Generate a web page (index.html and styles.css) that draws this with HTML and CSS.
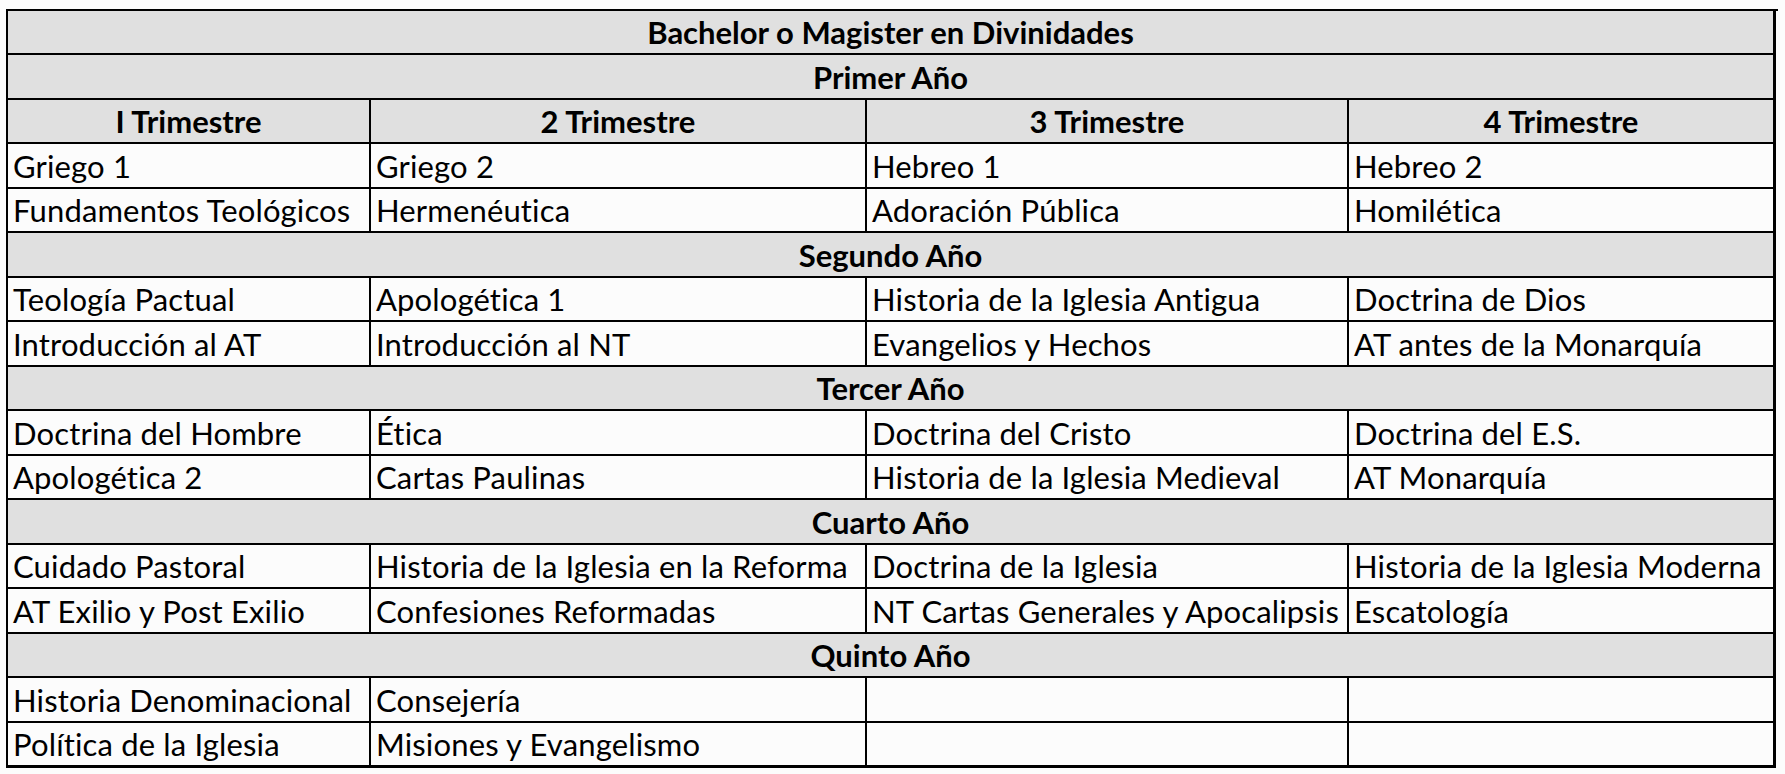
FILE: index.html
```html
<!DOCTYPE html>
<html lang="es">
<head>
<meta charset="utf-8">
<title>Bachelor o Magister en Divinidades</title>
<link rel="stylesheet" href="styles.css">
</head>
<body>
<div class="sheet">
  <div class="cell band title">Bachelor o Magister en Divinidades</div>
  <div class="cell band">Primer Año</div>
  <div class="cell head">I Trimestre</div>
  <div class="cell head">2 Trimestre</div>
  <div class="cell head">3 Trimestre</div>
  <div class="cell head last">4 Trimestre</div>

  <div class="cell">Griego 1</div>
  <div class="cell">Griego 2</div>
  <div class="cell">Hebreo 1</div>
  <div class="cell last">Hebreo 2</div>
  <div class="cell">Fundamentos Teológicos</div>
  <div class="cell">Hermenéutica</div>
  <div class="cell">Adoración Pública</div>
  <div class="cell last">Homilética</div>

  <div class="cell band">Segundo Año</div>
  <div class="cell">Teología Pactual</div>
  <div class="cell">Apologética 1</div>
  <div class="cell">Historia de la Iglesia Antigua</div>
  <div class="cell last">Doctrina de Dios</div>
  <div class="cell">Introducción al AT</div>
  <div class="cell">Introducción al NT</div>
  <div class="cell">Evangelios y Hechos</div>
  <div class="cell last">AT antes de la Monarquía</div>

  <div class="cell band">Tercer Año</div>
  <div class="cell">Doctrina del Hombre</div>
  <div class="cell">Ética</div>
  <div class="cell">Doctrina del Cristo</div>
  <div class="cell last">Doctrina del E.S.</div>
  <div class="cell">Apologética 2</div>
  <div class="cell">Cartas Paulinas</div>
  <div class="cell">Historia de la Iglesia Medieval</div>
  <div class="cell last">AT Monarquía</div>

  <div class="cell band">Cuarto Año</div>
  <div class="cell">Cuidado Pastoral</div>
  <div class="cell">Historia de la Iglesia en la Reforma</div>
  <div class="cell">Doctrina de la Iglesia</div>
  <div class="cell last">Historia de la Iglesia Moderna</div>
  <div class="cell">AT Exilio y Post Exilio</div>
  <div class="cell">Confesiones Reformadas</div>
  <div class="cell">NT Cartas Generales y Apocalipsis</div>
  <div class="cell last">Escatología</div>

  <div class="cell band">Quinto Año</div>
  <div class="cell">Historia Denominacional</div>
  <div class="cell">Consejería</div>
  <div class="cell"></div>
  <div class="cell last"></div>
  <div class="cell bottom">Política de la Iglesia</div>
  <div class="cell bottom">Misiones y Evangelismo</div>
  <div class="cell bottom"></div>
  <div class="cell bottom last"></div>
</div>
</body>
</html>
```
FILE: styles.css
```css
html, body {
  margin: 0;
  padding: 0;
  background: #fcfcfc;
}

body {
  padding: 9px 0 0 6px;
  font-family: Lato, "Open Sans", "DejaVu Sans", sans-serif;
  color: #000;
}

.sheet {
  display: grid;
  width: 1770px;
  grid-template-columns: 363px 496px 482px 427px;
  grid-template-rows: repeat(8, 44px 45px) 45px;
  border-left: 2px solid #000;
  border-top: 2px solid #000;
  box-sizing: content-box;
}

.cell {
  box-sizing: border-box;
  border-right: 2px solid #000;
  border-bottom: 2px solid #000;
  background: #fcfcfc;
  font-size: 31px;
  letter-spacing: 0.15px;
  line-height: 36px;
  padding: 0 0 3px 5px;
  display: flex;
  align-items: flex-end;
  white-space: nowrap;
  overflow: hidden;
}

.band {
  grid-column: 1 / -1;
  background: #e0e0e0;
  font-weight: bold;
  letter-spacing: 0;
  justify-content: center;
  padding-left: 0;
  border-right-width: 3px;
}

.head {
  background: #e0e0e0;
  font-weight: bold;
  letter-spacing: 0;
  justify-content: center;
  padding-left: 0;
}

.last {
  border-right-width: 3px;
}

.bottom {
  border-bottom-width: 3px;
}
```
